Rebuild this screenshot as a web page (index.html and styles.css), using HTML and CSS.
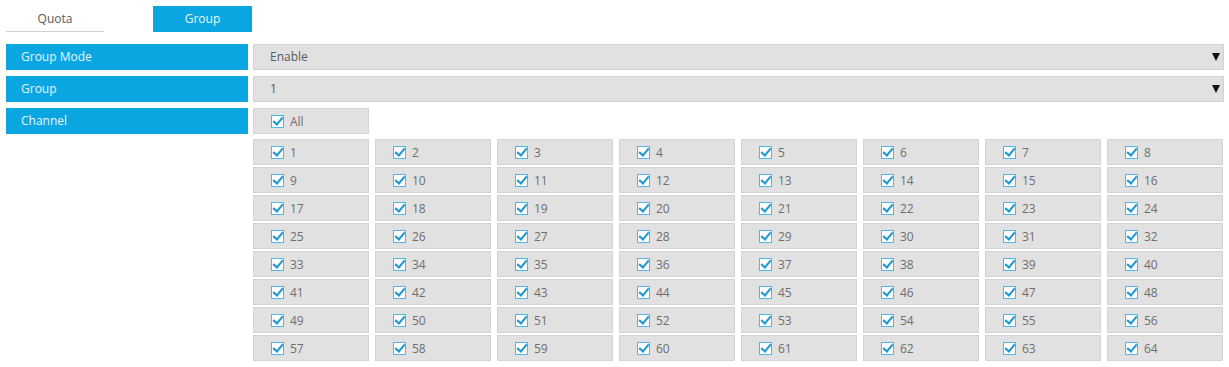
FILE: index.html
```html
<!DOCTYPE html>
<html lang="en">
<head>
    <meta charset="UTF-8">
    <meta name="viewport" content="width=device-width, initial-scale=1.0">
    <title>Group</title>
    <link rel="stylesheet" href="styles.css">
</head>
<body>
    <div class="page">
        <div class="tabs">
            <div class="tab">Quota</div>
            <div class="tab active">Group</div>
        </div>
        <div class="form">
            <div class="label">Group Mode</div>
            <div class="select">Enable<span class="arrow"></span></div>
            <div class="label">Group</div>
            <div class="select">1<span class="arrow"></span></div>
            <div class="label">Channel</div>
            <div class="channels">
                <div class="cell all"><span class="chk"></span>All</div>
                <div class="grid" id="grid"></div>
            </div>
        </div>
    </div>
    <script type="text/javascript">
        var grid = document.getElementById("grid");
        for (var i = 1; i <= 64; i++) {
            var cell = document.createElement("div");
            cell.className = "cell";
            cell.innerHTML = '<span class="chk"></span>' + i;
            grid.appendChild(cell);
        }
    </script>
</body>
</html>
```

FILE: styles.css
```css
body {
    margin: 0;
    font-family: "Open Sans", "Lato", sans-serif;
    font-size: 12px;
    color: #666;
    background: #fff;
}
.page {
    padding: 6px 5px 0 6px;
}
.tabs {
    display: flex;
    gap: 49px;
    height: 26px;
}
.tab {
    width: 98px;
    height: 25px;
    line-height: 25px;
    text-align: center;
    color: #5a5a5a;
    border-bottom: 1px solid #d0d0d0;
}
.tab.active {
    width: 99px;
    height: 26px;
    line-height: 26px;
    border-bottom: 0;
    background-color: #0aa6e2;
    color: #e8f6fc;
}
.form {
    display: grid;
    grid-template-columns: 242px 1fr;
    column-gap: 5px;
    row-gap: 6px;
    margin-top: 12px;
    align-items: start;
}
.label {
    height: 26px;
    line-height: 26px;
    padding-left: 15px;
    background-color: #0aa6e2;
    color: #e8f6fc;
}
.select {
    height: 24px;
    line-height: 24px;
    padding-left: 16px;
    background-color: #e1e1e1;
    border: 1px solid #d2d2d2;
    color: #5a5a5a;
    display: flex;
    justify-content: space-between;
    align-items: center;
}
.arrow {
    width: 0;
    height: 0;
    margin-right: 3px;
    border-left: 4px solid transparent;
    border-right: 4px solid transparent;
    border-top: 8px solid #111;
}
.channels {
    display: flex;
    flex-direction: column;
    gap: 5px;
}
.grid {
    display: grid;
    grid-template-columns: repeat(8, 116px);
    column-gap: 6px;
    row-gap: 2px;
}
.cell {
    box-sizing: border-box;
    height: 26px;
    padding-left: 17px;
    background-color: #e1e1e1;
    border: 1px solid #d4d4d4;
    display: flex;
    align-items: center;
    gap: 6px;
    color: #6e6e6e;
}
.cell.all {
    width: 116px;
}
.chk {
    position: relative;
    box-sizing: border-box;
    width: 13px;
    height: 13px;
    background: #fff;
    border: 1px solid #4cb8e8;
}
.chk::after {
    content: "";
    position: absolute;
    left: 3px;
    top: -1px;
    width: 4px;
    height: 8px;
    border-right: 2px solid #1798d6;
    border-bottom: 2px solid #1798d6;
    transform: rotate(40deg);
}
```
